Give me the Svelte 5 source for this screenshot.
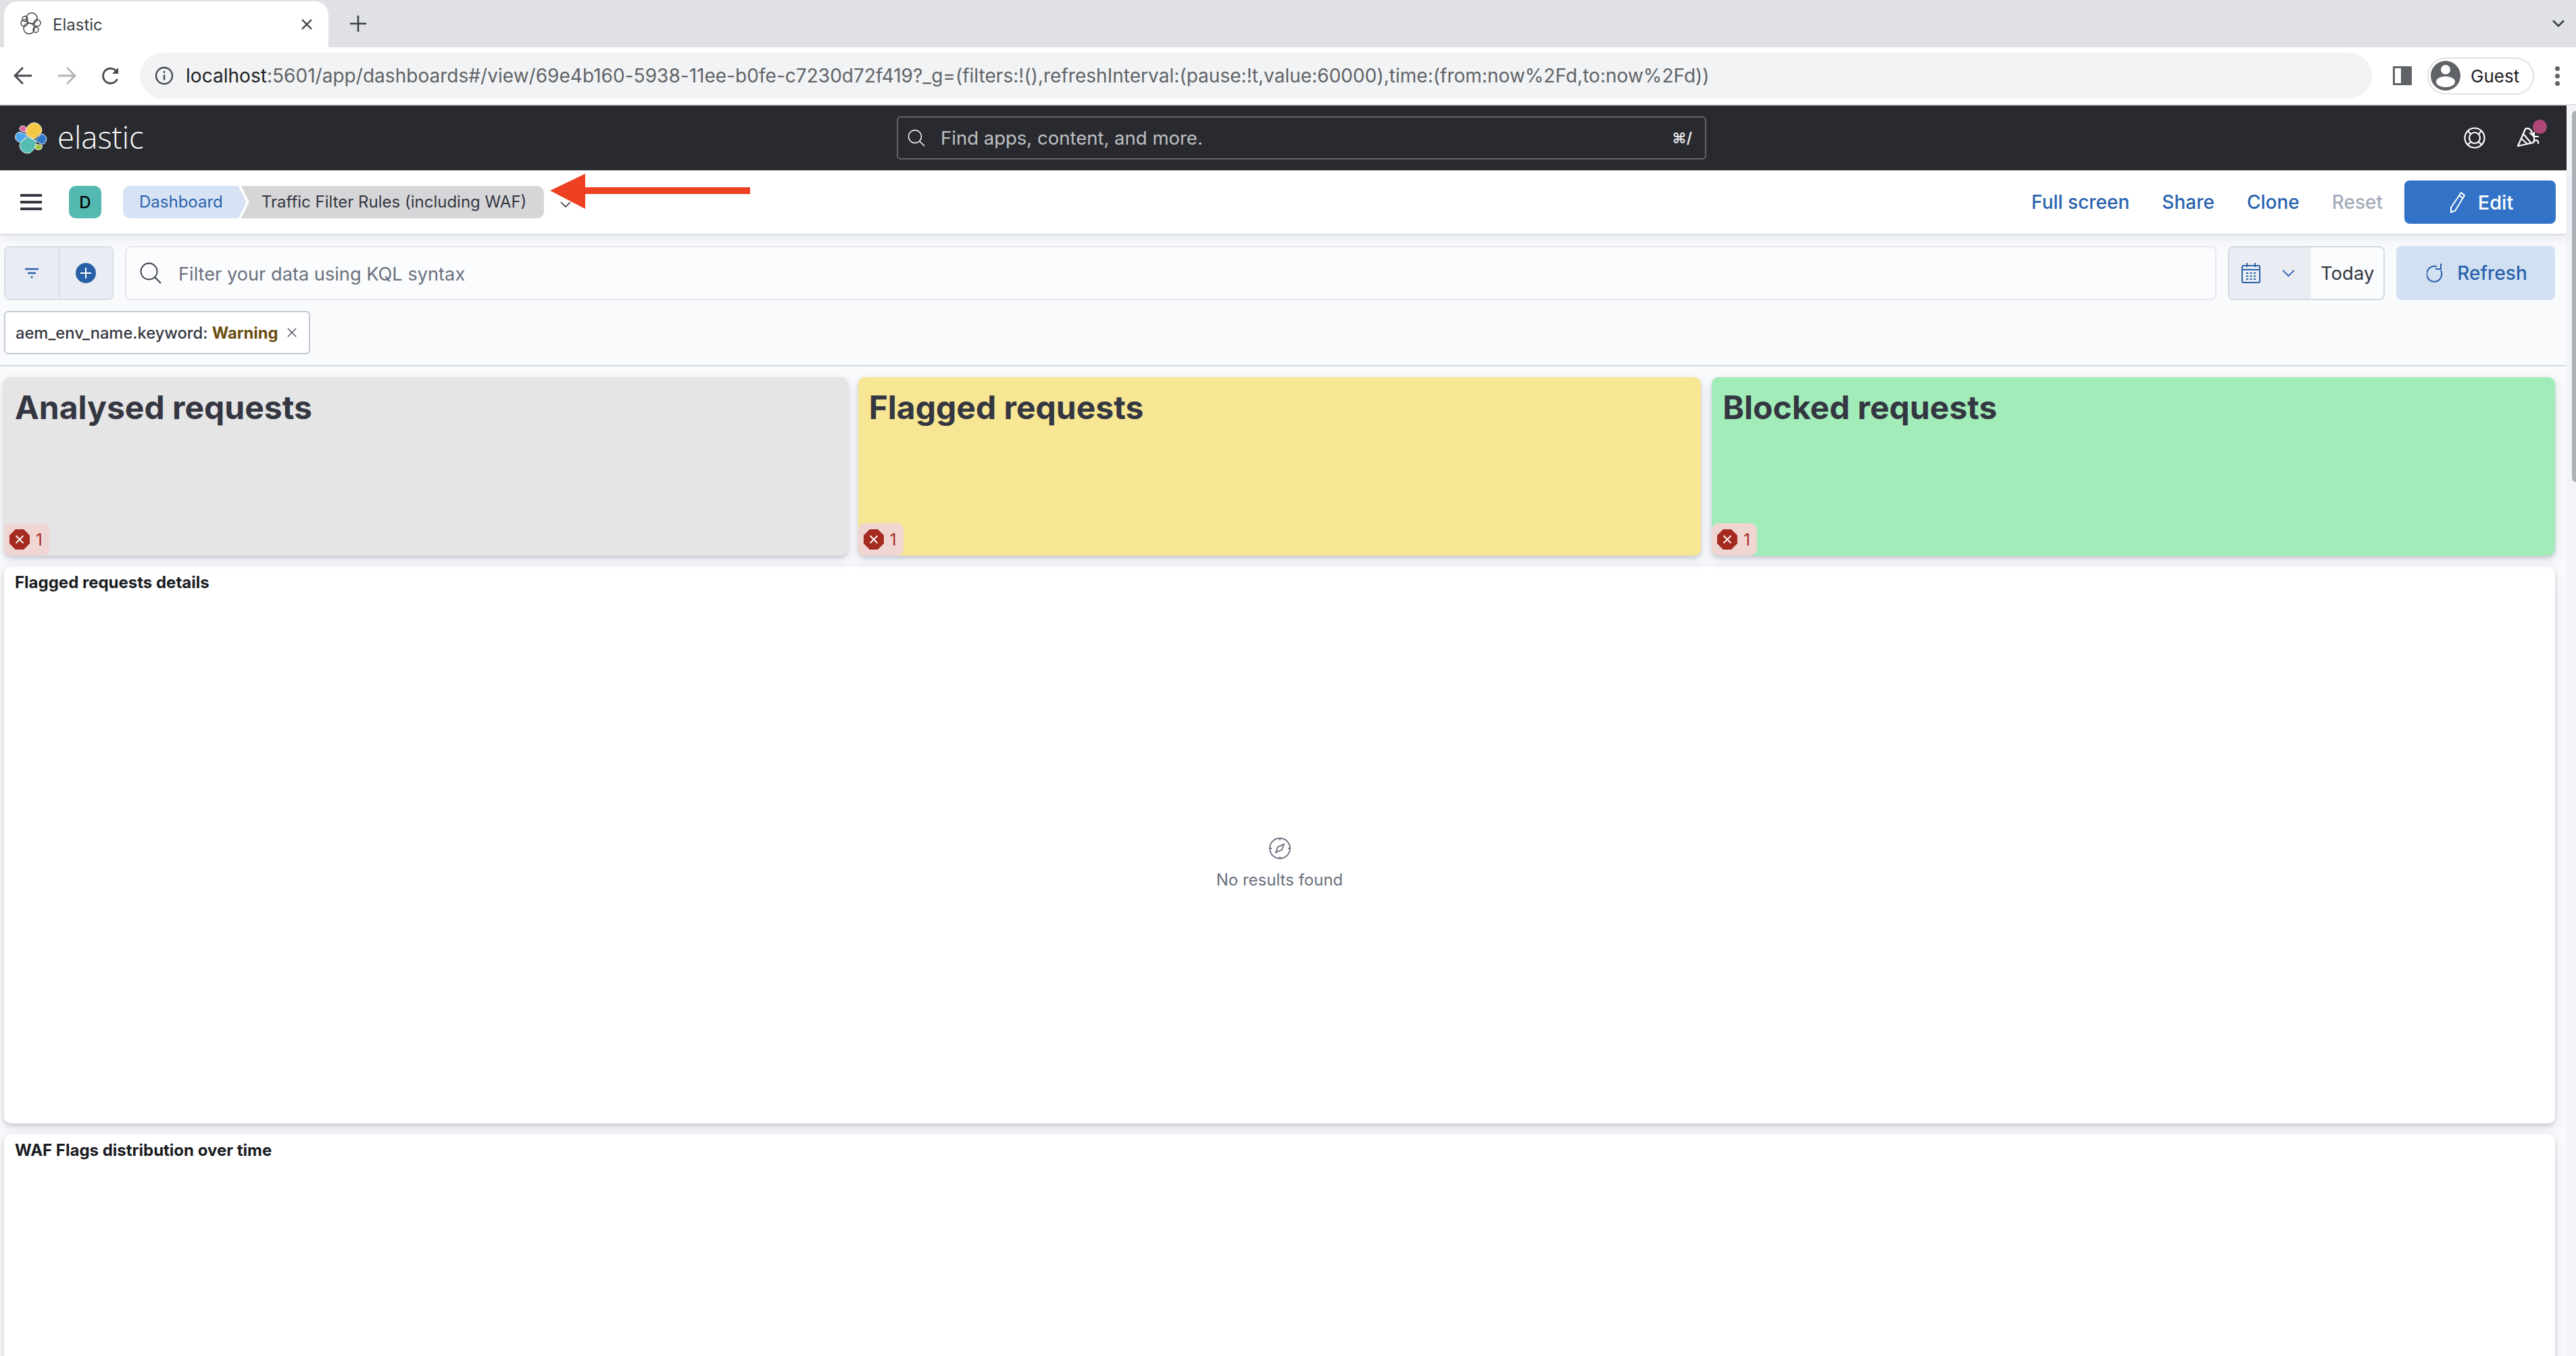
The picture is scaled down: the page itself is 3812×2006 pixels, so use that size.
<script lang="ts">
  const panels = [
    { title: 'Analysed requests', tone: 'grey' },
    { title: 'Flagged requests', tone: 'yellow' },
    { title: 'Blocked requests', tone: 'green' },
  ];
  const url = '5601/app/dashboards#/view/69e4b160-5938-11ee-b0fe-c7230d72f419?_g=(filters:!(),refreshInterval:(pause:!t,value:60000),time:(from:now%2Fd,to:now%2Fd))';
</script>

<div class="page">
  <header class="tabstrip">
    <div class="tab">
      <svg class="favicon" viewBox="0 0 33 33" fill="none" stroke="#3c4043" stroke-width="1.4">
        <circle cx="18" cy="9" r="8" />
        <circle cx="8" cy="10" r="4" />
        <circle cx="7" cy="16" r="5" />
        <circle cx="14" cy="24" r="8" />
        <circle cx="26" cy="16" r="5" />
        <circle cx="24" cy="26" r="4" />
      </svg>
      <span class="tab-title">Elastic</span>
      <svg class="tab-close" viewBox="0 0 16 16" stroke="#3c4043" stroke-width="2.4"><path d="M1 1l14 14M15 1L1 15" /></svg>
    </div>
    <svg class="new-tab" viewBox="0 0 24 24" stroke="#3c4043" stroke-width="2.6"><path d="M12 0v24M0 12h24" /></svg>
    <svg class="tabs-menu" viewBox="0 0 18 12" fill="none" stroke="#3c4043" stroke-width="2.6"><path d="M1 1.5l8 8 8-8" /></svg>
  </header>

  <div class="toolbar">
    <svg class="nav-ico" viewBox="0 0 28 28" fill="none" stroke="#45484d" stroke-width="2.8"><path d="M27 14H3M14 2L2 14l12 12" /></svg>
    <svg class="nav-ico fwd" viewBox="0 0 28 28" fill="none" stroke="#b3b5b9" stroke-width="2.8"><path d="M1 14h24M14 2l12 12-12 12" /></svg>
    <svg class="nav-ico reload" viewBox="0 0 28 28" fill="none" stroke="#45484d" stroke-width="2.8"><path d="M23.500 19a11 11 0 1 1-.5-10.500" /><path d="M25 2v9h-9z" fill="#45484d" stroke="none" /></svg>
    <div class="omnibox">
      <svg class="info" viewBox="0 0 28 28" fill="none" stroke="#45484d" stroke-width="2.4"><circle cx="14" cy="14" r="12" /><path d="M14 12.500v8" /><path d="M14 7v3" /></svg>
      <span class="url"><span class="host">localhost</span>:{url}</span>
    </div>
    <svg class="side-panel" viewBox="0 0 28 28"><path fill-rule="evenodd" fill="#5f6368" d="M0 0h28v28H0zM3 3v22h9V3z" /></svg>
    <div class="guest">
      <svg class="avatar" viewBox="0 0 44 44">
        <circle cx="22" cy="22" r="22" fill="#5f6368" />
        <circle cx="22" cy="13" r="7" fill="#fff" />
        <ellipse cx="22" cy="31" rx="14" ry="8" fill="#fff" />
      </svg>
      <span>Guest</span>
    </div>
    <div class="kebab"><i></i><i></i><i></i></div>
  </div>

  <div class="viewport">
    <div class="app">
      <div class="topbar">
        <div class="brand">
          <svg class="logo" viewBox="66 88 146 146" stroke="#fff" stroke-width="3">
            <path fill="#f5c847" d="M117 128c2-22 20-36 38-35 20 1 34 20 32 36-1 7-4 12-8 16l-27 22-28-15c-5-6-8-14-7-24z" />
            <path fill="#e0609f" d="M87 120c0-8 7-14 15-13 6 0 13 3 15 7-2 6-2 14-2 22l-15-5c-8-2-13-5-13-11z" />
            <path fill="#4fa7ec" d="M68 158c0-14 9-22 18-23 5 0 13 2 28 8l6 11-27 27c-14-2-25-10-25-23z" />
            <path fill="#55bcb4" d="M88 196c0-7 2-13 7-18l28-22 37 18c1 4 1 9 0 14-3 22-18 42-37 42-20 0-35-16-35-34z" />
            <path fill="#3278c8" d="M158 172l28-29c10 0 22 10 22 23 0 12-7 21-18 23-6 0-22-8-32-17z" />
            <path fill="#9bc53c" d="M160 190l27 3c4 4 2 12-2 17-6 6-18 6-25 2-2-7-1-15 0-22z" />
          </svg>
          <span class="wordmark">elastic</span>
        </div>
        <div class="global-search">
          <svg class="search-ico" viewBox="0 0 26 26" fill="none" stroke="#fff" stroke-width="1.5"><circle cx="11" cy="11" r="9.500" /><path d="M18 18l7 7" /></svg>
          <span class="search-text">Find apps, content, and more.</span>
          <span class="shortcut">⌘/</span>
        </div>
        <div class="top-icons">
          <svg class="help" viewBox="0 0 32 32" fill="none" stroke="#fff" stroke-width="2.2">
            <circle cx="16" cy="16" r="14.500" />
            <circle cx="16" cy="16" r="8" />
            <path d="M6 6l5 5M26 6l-5 5M6 26l5-5M26 26l-5-5" />
          </svg>
          <div class="cheer">
            <svg viewBox="0 0 34 34" fill="none" stroke="#fff" stroke-width="2.2" stroke-linejoin="round" stroke-linecap="round">
              <path d="M12 4L1 29l23-5" />
              <path d="M12 4c4-3 8 0 10 5 3 5 4 11 2 15" />
              <path d="M6 18l9 8M9 11l11 13" />
              <path d="M19 10l6 5M25 9v6h6M26 21c3-1 6 0 5 4" />
            </svg>
            <span class="dot"></span>
          </div>
        </div>
      </div>

      <div class="subbar">
        <div class="hamburger"><i></i><i></i><i></i></div>
        <span class="space">D</span>
        <nav class="crumbs">
          <span class="crumb first">Dashboard</span>
          <span class="crumb last">Traffic Filter Rules (including WAF)</span>
        </nav>
        <svg class="crumb-caret" viewBox="0 0 16 10" fill="none" stroke="#343741" stroke-width="1.6"><path d="M1 1l7 7 7-7" /></svg>
        <div class="actions">
          <span class="act">Full screen</span>
          <span class="act">Share</span>
          <span class="act">Clone</span>
          <span class="act off">Reset</span>
          <span class="edit">
            <svg viewBox="0 0 24 32" fill="none" stroke="#fff" stroke-width="2"><path d="M17 2l5 4L8 29l-6 2 0-7z" /><path d="M14 6l5 4" /></svg>
            Edit
          </span>
        </div>
      </div>

      <div class="filters">
        <div class="query">
          <div class="filter-btns">
            <span class="fbtn">
              <svg class="f-ico" viewBox="0 0 20 16" stroke="#2860a8" stroke-width="2.4"><path d="M0 2h20M4 8h12M8.500 14h3" /></svg>
            </span>
            <span class="fbtn">
              <svg class="plus" viewBox="0 0 30 30"><circle cx="15" cy="15" r="15" fill="#2860a8" /><path d="M15 7v16M7 15h16" stroke="#fff" stroke-width="2" /></svg>
            </span>
          </div>
          <div class="kql">
            <svg class="kql-ico" viewBox="0 0 32 32" fill="none" stroke="#343741" stroke-width="1.8"><circle cx="13.500" cy="13.500" r="12" /><path d="M22 22l9 9" /></svg>
            <span>Filter your data using KQL syntax</span>
          </div>
          <div class="dates">
            <span class="cal">
              <svg class="cal-ico" viewBox="0 0 28 30" fill="none" stroke="#2860a8" stroke-width="2">
                <rect x="1" y="4" width="26" height="25" rx="2" />
                <path d="M1 10h26M8 0v6M20 0v6" />
                <path d="M7 15h3M12.500 15h3M18 15h3M7 19.500h3M12.500 19.500h3M18 19.500h3M7 24h3M12.500 24h3M18 24h3" stroke-width="2.2" />
              </svg>
              <svg class="cal-caret" viewBox="0 0 20 12" fill="none" stroke="#2860a8" stroke-width="2"><path d="M1 1l9 9 9-9" /></svg>
            </span>
            <span class="today">Today</span>
          </div>
          <span class="refresh">
            <svg viewBox="0 0 24 28" fill="none" stroke="#2860a8" stroke-width="2"><path d="M15 4.500A11 11.500 0 1 0 21 10" /><path d="M21 0v8h-8" /></svg>
            Refresh
          </span>
        </div>
        <div class="pill-row">
          <span class="pill">aem_env_name.keyword: <b>Warning</b>
            <svg viewBox="0 0 16 16" stroke="#343741" stroke-width="1.6"><path d="M1 1l14 14M15 1L1 15" /></svg>
          </span>
        </div>
      </div>

      <main class="board">
        <div class="stats">
          {#each panels as panel}
            <section class="stat {panel.tone}">
              <h2>{panel.title}</h2>
              <span class="err">
                <svg viewBox="0 0 30 30">
                  <path fill="#a52a1f" d="M9 0h12l9 9v12l-9 9H9l-9-9V9z" />
                  <path d="M9.500 9.500l11 11M20.500 9.500l-11 11" stroke="#fff" stroke-width="1.8" />
                </svg>
                1
              </span>
            </section>
          {/each}
        </div>

        <section class="card details">
          <h3>Flagged requests details</h3>
          <div class="empty">
            <svg viewBox="0 0 32 32" fill="none" stroke="#69707d" stroke-width="1.8">
              <circle cx="16" cy="16" r="15" />
              <path d="M16 1v3M16 28v3M1 16h3M28 16h3" />
              <path d="M22 10l-3 8-9 4 3-8z" />
            </svg>
            <p>No results found</p>
          </div>
        </section>

        <section class="card flags">
          <h3>WAF Flags distribution over time</h3>
        </section>
      </main>
    </div>

    <div class="scrollbar"><div class="thumb"></div></div>

    <!-- annotation drawn over the shot -->
    <svg class="arrow" viewBox="0 0 296 52"><path fill="#ee4023" d="M0 25L52 0v20h244v10H52v22z" /></svg>
  </div>
</div>

<style>
  :global(body) {
    margin: 0;
    background: #fff;
  }
  .page {
    width: 3812px;
    height: 2006px;
    overflow: hidden;
    display: flex;
    flex-direction: column;
    font-family: Inter, "Liberation Sans", sans-serif;
  }
  svg {
    display: block;
    flex: none;
  }

  /* browser chrome */
  .tabstrip {
    height: 70px;
    background: #dfe1e5;
    display: flex;
    align-items: center;
    flex: none;
  }
  .tab {
    width: 480px;
    height: 68px;
    margin: 2px 0 0 6px;
    box-sizing: border-box;
    padding: 0 24px 0 23px;
    background: #fff;
    border-radius: 20px 20px 0 0;
    display: flex;
    align-items: center;
  }
  .favicon {
    width: 33px;
    height: 33px;
    margin-top: -4px;
  }
  .tab-title {
    margin-left: 16px;
    font-size: 24px;
    color: #3c4043;
    flex: 1;
  }
  .tab-close {
    width: 16px;
    height: 16px;
  }
  .new-tab {
    width: 24px;
    height: 24px;
    margin-left: 32px;
  }
  .tabs-menu {
    width: 18px;
    height: 12px;
    margin-left: auto;
    margin-right: 17px;
  }
  .toolbar {
    height: 84px;
    flex: none;
    background: #fff;
    display: flex;
    align-items: center;
    padding-left: 20px;
    box-sizing: border-box;
  }
  .nav-ico {
    width: 28px;
    height: 28px;
    margin-right: 37px;
  }
  .nav-ico.reload {
    margin-right: 29px;
  }
  .omnibox {
    width: 3303px;
    height: 68px;
    box-sizing: border-box;
    background: #f1f3f4;
    border-radius: 34px;
    display: flex;
    align-items: center;
    padding-left: 22px;
    margin-right: 31px;
  }
  .info {
    width: 28px;
    height: 28px;
  }
  .url {
    margin-left: 18px;
    font-size: 28px;
    letter-spacing: 0.03px;
    color: #5f6368;
    white-space: nowrap;
  }
  .host {
    color: #202124;
  }
  .side-panel {
    width: 28px;
    height: 28px;
    margin-right: 23px;
  }
  .guest {
    width: 158px;
    height: 55px;
    box-sizing: border-box;
    border: 2px solid #e1e1e1;
    border-radius: 28px;
    display: flex;
    align-items: center;
    padding-left: 3px;
    font-size: 26px;
    color: #202124;
  }
  .avatar {
    width: 44px;
    height: 44px;
    margin-right: 15px;
  }
  .kebab {
    margin-left: 31px;
    display: flex;
    flex-direction: column;
    gap: 4px;
  }
  .kebab i {
    width: 7px;
    height: 7px;
    border-radius: 50%;
    background: #5f6368;
  }

  /* kibana */
  .viewport {
    flex: 1;
    min-height: 0;
    display: flex;
    position: relative;
    border-top: 2px solid #e1e1e1;
  }
  .app {
    flex: 1;
    min-width: 0;
    background: #f9fafc;
    display: flex;
    flex-direction: column;
  }
  .scrollbar {
    width: 14px;
    flex: none;
    background: #f3f4f8;
    display: flex;
    justify-content: flex-end;
    padding-top: 8px;
    box-sizing: border-box;
  }
  .thumb {
    width: 6px;
    height: 549px;
    background: #aeb0b8;
    border-radius: 6px 0 0 6px;
  }
  .topbar {
    height: 96px;
    flex: none;
    background: #292a2f;
    display: grid;
    grid-template-columns: 1327px 1198px 1fr;
    align-items: center;
    color: #fff;
  }
  .brand {
    display: flex;
    align-items: center;
    padding-left: 22px;
  }
  .logo {
    width: 48px;
    height: 48px;
  }
  .wordmark {
    margin-left: 15px;
    font-family: "Open Sans", sans-serif;
    font-weight: 300;
    font-size: 45.500px;
    line-height: 1;
    margin-top: -2px;
  }
  .global-search {
    height: 64px;
    box-sizing: border-box;
    border: 2px solid #66676c;
    border-radius: 6px;
    display: flex;
    align-items: center;
    padding: 0 19px 0 14px;
  }
  .search-ico {
    width: 26px;
    height: 26px;
  }
  .search-text {
    margin-left: 23px;
    font-size: 27.500px;
    color: #bfc0c4;
  }
  .shortcut {
    margin-left: auto;
    font-size: 22px;
    font-weight: 600;
    color: #e6e6e8;
  }
  .top-icons {
    display: flex;
    align-items: center;
    justify-content: flex-end;
    gap: 47px;
    padding-right: 39px;
  }
  .help {
    width: 32px;
    height: 32px;
  }
  .cheer {
    position: relative;
    width: 34px;
    height: 34px;
  }
  .dot {
    position: absolute;
    top: -10px;
    right: -10px;
    width: 21px;
    height: 21px;
    border-radius: 50%;
    background: #b0497a;
  }
  .subbar {
    height: 94px;
    flex: none;
    background: #fff;
    display: flex;
    align-items: center;
    padding: 0 16px 0 30px;
    box-shadow: 0 2px 2px #d8dbe3, 0 6px 16px rgba(152, 162, 179, 0.18);
    position: relative;
  }
  .hamburger {
    display: flex;
    flex-direction: column;
    gap: 6px;
  }
  .hamburger i {
    display: block;
    width: 32px;
    height: 4px;
    background: #343741;
  }
  .space {
    width: 48px;
    height: 48px;
    margin-left: 40px;
    background: #54b9b1;
    border-radius: 10px;
    display: flex;
    align-items: center;
    justify-content: center;
    font-size: 24px;
    font-weight: 500;
    color: #000;
  }
  .crumbs {
    display: flex;
    margin-left: 32px;
    font-size: 24px;
    line-height: 48px;
  }
  .crumb {
    height: 48px;
    white-space: nowrap;
  }
  .crumb.first {
    padding: 0 35px 0 24px;
    background: #d6e3f4;
    color: #2a62ad;
    border-radius: 10px 0 0 10px;
    clip-path: polygon(0 0, calc(100% - 12px) 0, 100% 50%, calc(100% - 12px) 100%, 0 100%);
  }
  .crumb.last {
    margin-left: -8px;
    padding: 0 26px 0 30px;
    background: #d6d6d9;
    color: #343741;
    border-radius: 0 10px 10px 0;
    clip-path: polygon(0 0, 100% 0, 100% 100%, 0 100%, 12px 50%);
  }
  .crumb-caret {
    width: 16px;
    height: 10px;
    margin: 8px 0 0 24px;
  }
  .actions {
    margin-left: auto;
    display: flex;
    align-items: center;
    gap: 48px;
    font-size: 28px;
    font-weight: 500;
    color: #2a62ad;
  }
  .act.off {
    color: #a5acbb;
  }
  .edit {
    width: 224px;
    height: 64px;
    margin-left: -16px;
    box-sizing: border-box;
    padding-left: 4px;
    background: #3273c7;
    color: #fff;
    border-radius: 8px;
    display: flex;
    align-items: center;
    justify-content: center;
    gap: 18px;
    font-size: 29px;
  }
  .edit svg {
    width: 24px;
    height: 32px;
  }
  .filters {
    flex: none;
    padding: 18px 17px 16px 6px;
    border-bottom: 2px solid #d3dae6;
    background: #f9fafc;
  }
  .query {
    display: flex;
    height: 80px;
    gap: 17px;
    align-items: stretch;
  }
  .filter-btns {
    display: flex;
    width: 162px;
    box-sizing: border-box;
    border: 2px solid #d9dee8;
    border-radius: 8px;
    background: #e9edf3;
  }
  .fbtn {
    flex: 1;
    display: flex;
    align-items: center;
    justify-content: center;
  }
  .fbtn + .fbtn {
    border-left: 1px solid #cfd5e0;
  }
  .f-ico {
    width: 20px;
    height: 16px;
  }
  .plus {
    width: 30px;
    height: 30px;
  }
  .kql {
    flex: 1;
    box-sizing: border-box;
    border: 2px solid #e4e7ef;
    border-radius: 8px;
    background: #fbfcfd;
    display: flex;
    align-items: center;
    padding-left: 20px;
    font-size: 27.200px;
    color: #69707d;
  }
  .kql span {
    padding-top: 2px;
  }
  .kql-ico {
    width: 32px;
    height: 32px;
    margin-right: 25px;
  }
  .dates {
    width: 232px;
    box-sizing: border-box;
    border: 2px solid #d3dae6;
    border-radius: 8px;
    background: #fbfcfd;
    display: flex;
    overflow: hidden;
  }
  .cal {
    width: 121px;
    background: #e9edf3;
    display: flex;
    align-items: center;
    padding-left: 18px;
    box-sizing: border-box;
  }
  .cal-ico {
    width: 28px;
    height: 30px;
  }
  .cal-caret {
    width: 19px;
    height: 11px;
    margin-left: 32px;
  }
  .today {
    display: flex;
    align-items: center;
    padding-left: 14px;
    font-size: 27.500px;
    color: #343741;
  }
  .refresh {
    width: 235px;
    box-sizing: border-box;
    padding-left: 4px;
    background: #d2e1f1;
    border-radius: 8px;
    display: flex;
    align-items: center;
    justify-content: center;
    gap: 21px;
    font-size: 28px;
    font-weight: 500;
    color: #2a62ad;
  }
  .refresh svg {
    width: 24px;
    height: 28px;
  }
  .pill-row {
    display: flex;
    margin-top: 16px;
  }
  .pill {
    height: 64px;
    box-sizing: border-box;
    padding: 0 18px 0 15px;
    background: #fff;
    border: 2px solid #c2c8d4;
    border-radius: 6px;
    display: flex;
    align-items: center;
    white-space: pre;
    font-size: 23.700px;
    font-weight: 500;
    color: #343741;
  }
  .pill b {
    font-weight: 700;
    color: #6a4d10;
  }
  .pill svg {
    width: 14px;
    height: 14px;
    margin-left: 14px;
  }
  .board {
    flex: 1;
    min-height: 0;
    padding: 16px 17px 0 6px;
    display: flex;
    flex-direction: column;
    gap: 16px;
    overflow: hidden;
  }
  .stats {
    display: grid;
    grid-template-columns: repeat(3, 1fr);
    gap: 16px;
    height: 264px;
    flex: none;
  }
  .stat {
    position: relative;
    border-radius: 10px;
    padding: 14px 16px;
    box-sizing: border-box;
    box-shadow: 0 3px 6px rgba(65, 75, 95, 0.22), 0 8px 18px rgba(90, 100, 120, 0.12);
  }
  .stat h2 {
    margin: 0;
    font-size: 48px;
    line-height: 62px;
    font-weight: 700;
    color: #343741;
  }
  .grey { background: #e5e5e5; }
  .yellow { background: #f7e693; }
  .green { background: #a1ecb8; }
  .err {
    position: absolute;
    left: 0;
    bottom: 0;
    width: 67px;
    height: 48px;
    box-sizing: border-box;
    padding-left: 8px;
    background: #f0d6d3;
    border-radius: 10px;
    display: flex;
    align-items: center;
    gap: 9px;
    font-size: 24px;
    color: #a52a1f;
  }
  .err svg {
    width: 30px;
    height: 30px;
  }
  .card {
    background: #fff;
    border-radius: 10px;
    padding: 9px 16px 11px;
    box-sizing: border-box;
    box-shadow: 0 3px 6px rgba(65, 75, 95, 0.22), 0 8px 18px rgba(90, 100, 120, 0.12);
    display: flex;
    flex-direction: column;
    flex: none;
  }
  .card h3 {
    margin: 0;
    font-size: 24px;
    line-height: 30px;
    font-weight: 700;
    color: #1a1c21;
  }
  .details {
    height: 824px;
  }
  .flags {
    height: 600px;
  }
  .empty {
    flex: 1;
    display: flex;
    flex-direction: column;
    align-items: center;
    justify-content: center;
    padding-top: 28px;
    color: #69707d;
  }
  .empty svg {
    width: 32px;
    height: 32px;
  }
  .empty p {
    margin: 16px 0 0;
    font-size: 24px;
    line-height: 30px;
  }
  .arrow {
    position: absolute;
    left: 814px;
    top: 101px;
    width: 296px;
    height: 52px;
  }
</style>
